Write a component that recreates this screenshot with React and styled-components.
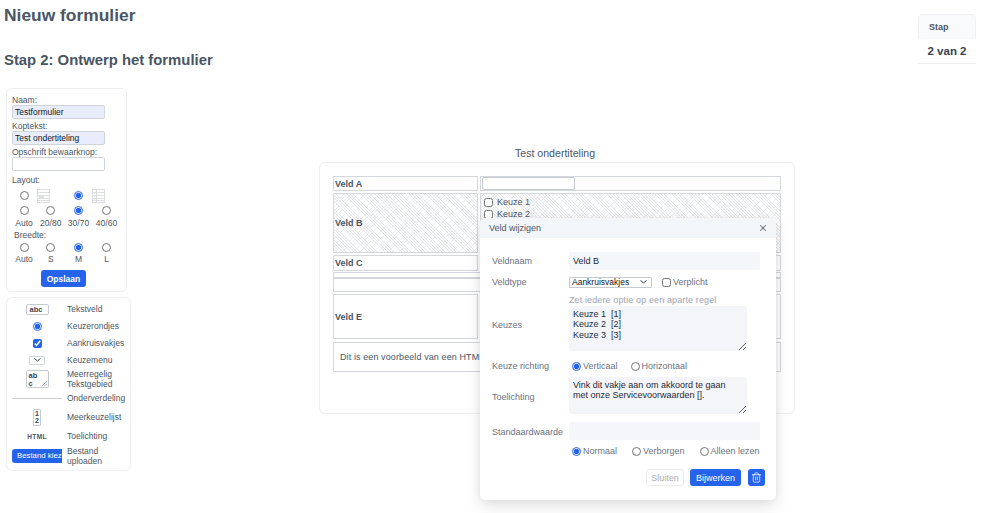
import React from 'react';
import styled, { createGlobalStyle, css } from 'styled-components';
import { Trash2, X } from 'lucide-react';

const Global = createGlobalStyle`
  * { box-sizing: border-box; }
  html, body { margin: 0; padding: 0; background: #fff; }
  body { font-family: "Liberation Sans", Arial, sans-serif; color: #4b5563; }
  input, select, textarea, button { font-family: inherit; margin: 0; }
  input[type=radio], input[type=checkbox] { accent-color: #2563eb; width: 9px; height: 9px; margin: 0; display: block; }
`;

const Page = styled.div`
  position: relative; width: 984px; height: 513px; overflow: hidden;
`;
const Header = styled.header`
  display: flex; justify-content: space-between; align-items: flex-start;
  padding: 5px 8px 0 4px; height: 88px;
`;
const Titles = styled.div`display: flex; flex-direction: column;`;
const H1 = styled.h1`margin: 0; font-size: 17.4px; line-height: 21px; font-weight: 700; color: #4b5563;`;
const H2 = styled.h2`margin: 24px 0 0; font-size: 14.85px; line-height: 20px; font-weight: 700; color: #4b5563;`;
const Stat = styled.div`
  width: 58px; margin-top: 9px; border-bottom: 1px solid #f0f1f3; border-radius: 5px 5px 0 0;
`;
const StatHead = styled.div`
  height: 25px; background: #f9fafb; padding-left: 10px; font-size: 9px; font-weight: 700; line-height: 25px;
  border: 1px solid #f0f1f3; border-bottom: 0; border-radius: 5px 5px 0 0; color: #4b5563;
`;
const StatValue = styled.div`
  height: 24px; text-align: center; font-size: 11.5px; font-weight: 700; line-height: 24px; color: #374151;
`;
const Body = styled.div`display: flex; align-items: flex-start;`;
const Side = styled.aside`
  width: 131px; margin-left: 6px; display: flex; flex-direction: column; gap: 5px; flex: none;
`;
const Card = styled.div`
  background: #fff; border: 1px solid #eceef1; border-radius: 5px;
`;
const SettingsCard = styled(Card)`
  width: 121px; height: 204px; padding: 7px 5px 0; font-size: 8.5px;
`;
const FieldLabel = styled.label`
  display: block; line-height: 9px; margin-top: ${p => p.$mt ?? 0}px; color: #4b5563; padding-left: ${p => p.$pl ?? 0}px;
`;
const NameInput = styled.input`
  display: block; width: 93px; height: 14px; padding: 0 2px; font-size: 8.5px; color: #111827;
  border: 1px solid #cfd3da; border-radius: 2px; background: ${p => p.$filled ? '#e8ecfb' : '#fff'}; margin-top: 0; outline: none;
`;
const OptionGrid = styled.div`
  display: grid; grid-template-columns: 26px 27.5px 28px 28px; justify-items: center; align-items: center;
  margin-top: ${p => p.$mt ?? 0}px; margin-left: -1px;
`;
const LayoutRow = styled.div`
  display: grid; grid-template-columns: 17px 37px 18px 13px; align-items: center; justify-items: start;
  margin: 3px 0 0 7.5px; height: 15px;
`;
const OptionText = styled.span`font-size: 8.5px; line-height: 11px; color: #4b5563; margin-top: ${p => p.$mt ?? 2}px;`;
const SaveRow = styled.div`display: flex; justify-content: center; margin-top: 5px; padding-right: 6px;`;
const PrimaryButton = styled.button`
  height: ${p => p.$h ?? 17}px; border: 0; border-radius: 3px; background: #2563eb; color: #fff; font-size: 8.5px;
  font-weight: 700; padding: 0 ${p => p.$px ?? 6}px;
`;
const TableIcon = ({ cols }) => (
  <svg width="13" height="14" viewBox="0 0 13 14" fill="none" stroke="#cdd0d5" strokeWidth="0.7">
    <rect x="0.5" y="0.5" width="12" height="13" />
    <path d="M.5 3.5h12M.5 6.5h12M.5 9.5h12M.5 11.5h12" />
    {cols && <path d="M4.5 .5v13M2 5h1M2 8h1M2 10.5h1" />}
    {!cols && <path d="M2 8h5" stroke="#9ca3af" />}
  </svg>
);

const PaletteCard = styled(Card)`
  width: 125px; height: 174px; padding: 2.5px 0 0 5px; border-radius: 6px;
`;
const PaletteRow = styled.div`
  display: grid; grid-template-columns: 50px 1fr; column-gap: 5px; align-items: center;
  height: ${p => p.$h}px;
`;
const PreviewCell = styled.div`
  display: flex; justify-content: center; align-items: center; width: 50px; overflow: hidden;
`;
const PaletteLabel = styled.span`font-size: 8.5px; line-height: 10px; color: #4b5563;`;
const SmallField = styled.div`
  width: 23px; height: 11px; border: 1px solid #c5c9d0; border-radius: 2px; font-size: 7.5px; font-weight: 700; line-height: 9px;
  padding-left: 3px; color: #374151;
`;
const SmallSelect = styled.div`
  width: 16px; height: 9px; border: 1px solid #d1d5db; border-radius: 1px; display: flex; justify-content: center; align-items: center;
`;
const SmallArea = styled.div`
  position: relative; width: 23px; height: 18px; border: 1px solid #c5c9d0; border-radius: 2px; font-size: 7.5px; line-height: 8px; padding: 1px 10px 0 2px;
  font-weight: 700; color: #374151; word-break: break-all;
`;
const Grip = styled.svg`position: absolute; right: 1px; bottom: 1px;`;
const Divider = styled.div`width: 50px; height: 1px; background: #c9cdd3;`;
const SmallList = styled.div`
  width: 8px; height: 17px; border: 1px solid #c5c9d0; border-radius: 1px; font-size: 7px; font-weight: 700; line-height: 7.5px; text-align: center; color: #374151;
`;
const HtmlTag = styled.span`font-size: 6.5px; font-weight: 700; letter-spacing: .4px; color: #4b5563;`;
const FileClip = styled.div`
  width: 50px; height: 14px; background: #2563eb; border-radius: 3px 0 0 3px; overflow: hidden; padding-left: 5px;
`;
const FileText = styled.span`
  display: block; width: 45px; color: #fff; font-size: 7.8px; line-height: 14px; white-space: nowrap; overflow: hidden;
`;

const Main = styled.main`width: 476px; margin: 59px 0 0 182px; flex: none;`;
const FormTitle = styled.div`text-align: center; font-size: 10.6px; line-height: 12px; height: 15px; color: #4b5563; padding-right: 4px;`;
const FormCard = styled(Card)`height: 252px; padding: 13px 13px 0 13px; border-radius: 6px; display: flex; flex-direction: column;`;
const Row = styled.div`
  display: flex; gap: 2px; height: ${p => p.$h}px; margin-bottom: ${p => p.$mb ?? 2}px; flex: none;
`;
const hatch = css`
  background-color: #fff;
  background-image:
    repeating-linear-gradient(45deg, #e6e7ea 0 .5px, transparent .5px 2px),
    repeating-linear-gradient(-45deg, #eff0f2 0 .5px, transparent .5px 2.5px);
`;
const Cell = styled.div`
  border: 1px solid #d4d7dc; display: flex; align-items: center; font-size: 9px; padding-left: 1px;
  width: ${p => p.$w ? p.$w + 'px' : 'auto'}; flex: ${p => p.$w ? 'none' : 1};
  font-weight: ${p => p.$bold ? 700 : 400}; color: #4b5563;
  ${p => p.$hatch && hatch}
`;
const WideCell = styled(Cell)`padding-left: 6px; font-size: 9px; letter-spacing: .1px;`;
const ChoiceCell = styled(Cell)`flex-direction: column; align-items: flex-start; padding: 2px 0 0 3px;`;
const Choice = styled.label`display: flex; align-items: center; gap: 4px; height: 12px; font-size: 9px; color: #4b5563;`;
const PreviewInput = styled.input`width: 93px; height: 13px; border: 1px solid #c5c9d0; border-radius: 2px; background: #fff;`;

const Modal = styled.section`
  position: absolute; left: 480px; top: 218px; width: 296px; height: 282px; background: #fff; border-radius: 5px;
  box-shadow: 0 6px 16px rgba(0,0,0,.12), 0 0 6px rgba(0,0,0,.06);
`;
const ModalHead = styled.div`
  height: 20px; display: flex; justify-content: space-between; align-items: center; padding: 0 8px 0 9px;
  background: #f3f6f9; border-radius: 5px 5px 0 0; font-size: 9px; color: #4b5563;
`;
const ModalBody = styled.div`
  padding: 14px 0 0 12px; display: flex; flex-direction: column;
`;
const FormRow = styled.div`
  display: grid; grid-template-columns: 77px 1fr; align-items: center;
  height: ${p => p.$h}px; margin-top: ${p => p.$mt ?? 0}px; font-size: 9px; color: #6b7280;
`;
const FormLabel = styled.span`
  font-size: 9px; color: #6b7280; white-space: nowrap;
  padding-bottom: ${p => p.$up ?? 0}px; padding-top: ${p => p.$down ?? 0}px;
`;
const TextInput = styled.input`
  width: 191px; height: 18px; border: 0; border-radius: 2px; background: #f5f6f9; padding: 0 4px; font-size: 9px; color: #1f2937; outline: none;
`;
const Controls = styled.div`display: flex; align-items: center;`;
const FieldSelect = styled.select`
  appearance: none; width: 83px; height: 11px; font-size: 8.5px; border: 1px solid #c5c9d0; border-radius: 1px; color: #111827; padding: 0 2px; line-height: 9px;
  background: #fff url("data:image/svg+xml,%3Csvg xmlns='http://www.w3.org/2000/svg' width='7' height='4'%3E%3Cpath d='M.5.5l3 2.5 3-2.5' fill='none' stroke='%23374151'/%3E%3C/svg%3E") no-repeat right 4px center;
`;
const Check = styled.label`
  display: flex; align-items: center; gap: ${p => p.$gap ?? 2}px; margin-left: ${p => p.$ml ?? 0}px; font-size: 9px; color: #6b7280;
`;
const Hint = styled.div`font-size: 9px; line-height: 11px; color: #9ca3af; margin: 7px 0 0 77px; letter-spacing: .12px;`;
const Area = styled.textarea`
  display: block; width: 178px; height: ${p => p.$h}px; border: 0; border-radius: 3px; background: #f3f5f9; padding: 3px 4px; font-size: 9px; line-height: 10.3px;
  color: #1f2937; outline: none; resize: vertical; overflow: hidden;
`;
const Actions = styled.div`
  display: flex; align-items: center; gap: 6px; margin: 12px 0 0 154px;
`;
const GhostButton = styled.button`
  width: 38px; height: 17px; border: 1px solid #e8eaed; border-radius: 3px; background: #fff; color: #a8adb5; font-size: 9px; padding: 0;
`;
const IconButton = styled(PrimaryButton)`
  width: 17px; padding: 0; display: flex; align-items: center; justify-content: center; margin-left: 1px;
`;
const SubmitButton = styled(PrimaryButton)`width: 51px; padding: 0; font-weight: 400; font-size: 9px;`;

const paletteItems = [
  [17, <SmallField>abc</SmallField>, 'Tekstveld'],
  [17, <input type="radio" checked readOnly />, 'Keuzerondjes'],
  [17, <input type="checkbox" checked readOnly />, 'Aankruisvakjes'],
  [17, <SmallSelect><svg width="7" height="4" viewBox="0 0 7 4" fill="none" stroke="#374151" strokeWidth="1"><path d="M.5.5l3 2.5 3-2.5" /></svg></SmallSelect>, 'Keuzemenu'],
  [21, <SmallArea>abc<Grip width="5" height="5" viewBox="0 0 5 5" stroke="#6b7280" strokeWidth=".5"><path d="M0 5L5 0M2.5 5L5 2.5" /></Grip></SmallArea>, <>Meerregelig<br />Tekstgebied</>],
  [17, <Divider />, 'Onderverdeling'],
  [21, <SmallList>1<br />2</SmallList>, 'Meerkeuzelijst'],
  [17, <HtmlTag>HTML</HtmlTag>, 'Toelichting'],
  [23, <FileClip><FileText>Bestand kiezen</FileText></FileClip>, <>Bestand<br />uploaden</>],
];

export default function App() {
  return (
    <Page>
      <Global />
      <Header>
        <Titles>
          <H1>Nieuw formulier</H1>
          <H2>Stap 2: Ontwerp het formulier</H2>
        </Titles>
        <Stat>
          <StatHead>Stap</StatHead>
          <StatValue>2 van 2</StatValue>
        </Stat>
      </Header>
      <Body>
        <Side>
          <SettingsCard>
            <FieldLabel>Naam:</FieldLabel>
            <NameInput $filled defaultValue="Testformulier" />
            <FieldLabel $mt={3}>Koptekst:</FieldLabel>
            <NameInput $filled defaultValue="Test ondertiteling" />
            <FieldLabel $mt={3}>Opschrift bewaarknop:</FieldLabel>
            <NameInput />
            <FieldLabel $mt={5}>Layout:</FieldLabel>
            <LayoutRow>
              <input type="radio" name="l1" readOnly />
              <TableIcon />
              <input type="radio" name="l1" defaultChecked />
              <TableIcon cols />
            </LayoutRow>
            <OptionGrid $mt={3}>
              <input type="radio" name="l2" />
              <input type="radio" name="l2" />
              <input type="radio" name="l2" defaultChecked />
              <input type="radio" name="l2" />
              <OptionText $mt={3}>Auto</OptionText>
              <OptionText $mt={3}>20/80</OptionText>
              <OptionText $mt={3}>30/70</OptionText>
              <OptionText $mt={3}>40/60</OptionText>
            </OptionGrid>
            <FieldLabel $mt={2} $pl={2}>Breedte:</FieldLabel>
            <OptionGrid $mt={3}>
              <input type="radio" name="b" />
              <input type="radio" name="b" />
              <input type="radio" name="b" defaultChecked />
              <input type="radio" name="b" />
              <OptionText>Auto</OptionText>
              <OptionText>S</OptionText>
              <OptionText>M</OptionText>
              <OptionText>L</OptionText>
            </OptionGrid>
            <SaveRow><PrimaryButton>Opslaan</PrimaryButton></SaveRow>
          </SettingsCard>
          <PaletteCard>
            {paletteItems.map(([h, preview, label], i) => (
              <PaletteRow key={i} $h={h}>
                <PreviewCell>{preview}</PreviewCell>
                <PaletteLabel>{label}</PaletteLabel>
              </PaletteRow>
            ))}
          </PaletteCard>
        </Side>
        <Main>
          <FormTitle>Test ondertiteling</FormTitle>
          <FormCard>
            <Row $h={15}><Cell $w={145} $bold>Veld A</Cell><Cell><PreviewInput /></Cell></Row>
            <Row $h={60}>
              <Cell $w={145} $bold $hatch>Veld B</Cell>
              <ChoiceCell $hatch>
                <Choice><input type="checkbox" /> Keuze 1</Choice>
                <Choice><input type="checkbox" /> Keuze 2</Choice>
              </ChoiceCell>
            </Row>
            <Row $h={16} $mb={1}><Cell $w={145} $bold>Veld C</Cell><Cell /></Row>
            <Row $h={6} $mb={0}><Cell /></Row>
            <Row $h={14}><Cell /></Row>
            <Row $h={45} $mb={3}><Cell $w={145} $bold>Veld E</Cell><Cell /></Row>
            <Row $h={30} $mb={0}><WideCell>Dit is een voorbeeld van een HTML-toelichting.</WideCell></Row>
          </FormCard>
        </Main>
      </Body>
      <Modal>
        <ModalHead>Veld wijzigen<X size={10} strokeWidth={2.5} color="#6b7280" /></ModalHead>
        <ModalBody>
          <FormRow $h={18}>
            <FormLabel>Veldnaam</FormLabel>
            <TextInput defaultValue="Veld B" />
          </FormRow>
          <FormRow $h={12} $mt={6}>
            <FormLabel>Veldtype</FormLabel>
            <Controls>
              <FieldSelect defaultValue="a"><option value="a">Aankruisvakjes</option></FieldSelect>
              <Check $ml={10} $gap={2}><input type="checkbox" />Verplicht</Check>
            </Controls>
          </FormRow>
          <Hint>Zet iedere optie op een aparte regel</Hint>
          <FormRow $h={45}>
            <FormLabel $up={8}>Keuzes</FormLabel>
            <Area $h={45} defaultValue={'Keuze 1  [1]\nKeuze 2  [2]\nKeuze 3  [3]'} />
          </FormRow>
          <FormRow $h={12} $mt={9}>
            <FormLabel>Keuze richting</FormLabel>
            <Controls>
              <Check $ml={3}><input type="radio" name="r" defaultChecked />Verticaal</Check>
              <Check $ml={13}><input type="radio" name="r" />Horizontaal</Check>
            </Controls>
          </FormRow>
          <FormRow $h={37} $mt={5}>
            <FormLabel $down={3}>Toelichting</FormLabel>
            <Area $h={37} defaultValue={'Vink dit vakje aan om akkoord te gaan\nmet onze Servicevoorwaarden [].'} />
          </FormRow>
          <FormRow $h={18} $mt={8}>
            <FormLabel $down={2}>Standaardwaarde</FormLabel>
            <TextInput />
          </FormRow>
          <FormRow $h={12} $mt={5}>
            <span />
            <Controls>
              <Check $ml={3}><input type="radio" name="v" defaultChecked />Normaal</Check>
              <Check $ml={15}><input type="radio" name="v" />Verborgen</Check>
              <Check $ml={15}><input type="radio" name="v" />Alleen lezen</Check>
            </Controls>
          </FormRow>
          <Actions>
            <GhostButton>Sluiten</GhostButton>
            <SubmitButton>Bijwerken</SubmitButton>
            <IconButton><Trash2 size={11} color="#fff" strokeWidth={1.6} /></IconButton>
          </Actions>
        </ModalBody>
      </Modal>
    </Page>
  );
}
